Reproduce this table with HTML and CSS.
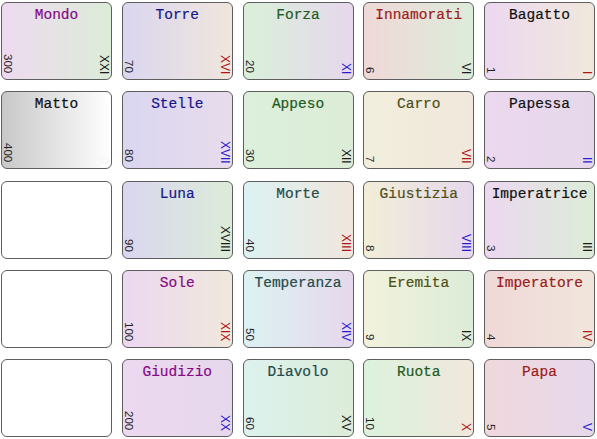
FILE: index.html
```html
<!DOCTYPE html>
<html>
<head>
<meta charset="utf-8">
<link rel="stylesheet" href="styles.css">
</head>
<body>
<div class="board">
  <div class="card g1"><div class="name c-purple">Mondo</div><div class="foot"><span class="num">300</span><span class="rom r-black">XXI</span></div></div>
  <div class="card g2"><div class="name c-navy">Torre</div><div class="foot"><span class="num">70</span><span class="rom r-red">XVI</span></div></div>
  <div class="card g3"><div class="name c-green">Forza</div><div class="foot"><span class="num">20</span><span class="rom r-blue">XI</span></div></div>
  <div class="card g4"><div class="name c-red">Innamorati</div><div class="foot"><span class="num">6</span><span class="rom r-black">VI</span></div></div>
  <div class="card g5"><div class="name c-black">Bagatto</div><div class="foot"><span class="num">1</span><span class="rom r-red">I</span></div></div>

  <div class="card g6"><div class="name c-black">Matto</div><div class="foot"><span class="num">400</span><span class="rom r-white">0</span></div></div>
  <div class="card g7"><div class="name c-navy">Stelle</div><div class="foot"><span class="num">80</span><span class="rom r-blue">XVII</span></div></div>
  <div class="card g8"><div class="name c-green">Appeso</div><div class="foot"><span class="num">30</span><span class="rom r-black">XII</span></div></div>
  <div class="card g9"><div class="name c-olive">Carro</div><div class="foot"><span class="num">7</span><span class="rom r-red">VII</span></div></div>
  <div class="card g10"><div class="name c-black">Papessa</div><div class="foot"><span class="num">2</span><span class="rom r-blue">II</span></div></div>

  <div class="card blank"></div>
  <div class="card g12"><div class="name c-navy">Luna</div><div class="foot"><span class="num">90</span><span class="rom r-black">XVIII</span></div></div>
  <div class="card g13"><div class="name c-slate">Morte</div><div class="foot"><span class="num">40</span><span class="rom r-red">XIII</span></div></div>
  <div class="card g14"><div class="name c-olive">Giustizia</div><div class="foot"><span class="num">8</span><span class="rom r-blue">VIII</span></div></div>
  <div class="card g15"><div class="name c-black">Imperatrice</div><div class="foot"><span class="num">3</span><span class="rom r-black">III</span></div></div>

  <div class="card blank"></div>
  <div class="card g17"><div class="name c-purple">Sole</div><div class="foot"><span class="num">100</span><span class="rom r-red">XIX</span></div></div>
  <div class="card g18"><div class="name c-slate">Temperanza</div><div class="foot"><span class="num">50</span><span class="rom r-blue">XIV</span></div></div>
  <div class="card g19"><div class="name c-olive">Eremita</div><div class="foot"><span class="num">9</span><span class="rom r-black">IX</span></div></div>
  <div class="card g20"><div class="name c-red">Imperatore</div><div class="foot"><span class="num">4</span><span class="rom r-red">IV</span></div></div>

  <div class="card blank"></div>
  <div class="card g22"><div class="name c-purple">Giudizio</div><div class="foot"><span class="num">200</span><span class="rom r-blue">XX</span></div></div>
  <div class="card g23"><div class="name c-slate">Diavolo</div><div class="foot"><span class="num">60</span><span class="rom r-black">XV</span></div></div>
  <div class="card g24"><div class="name c-green">Ruota</div><div class="foot"><span class="num">10</span><span class="rom r-red">X</span></div></div>
  <div class="card g25"><div class="name c-red">Papa</div><div class="foot"><span class="num">5</span><span class="rom r-blue">V</span></div></div>
</div>
</body>
</html>
```

FILE: styles.css
```css
html, body {
  margin: 0;
  padding: 0;
  background: #ffffff;
}

.board {
  display: grid;
  grid-template-columns: repeat(5, 111px);
  grid-template-rows: repeat(5, 78px);
  column-gap: 9.75px;
  row-gap: 11.25px;
  padding: 2px 0 0 1px;
}

.card {
  box-sizing: border-box;
  border: 1px solid #5e5e5e;
  border-radius: 6px;
  display: flex;
  flex-direction: column;
  justify-content: space-between;
  overflow: hidden;
  background: #ffffff;
}

.name {
  font-family: "Liberation Mono", "Courier New", monospace;
  font-size: 14.5px;
  line-height: 17px;
  text-align: center;
  padding-top: 4px;
  white-space: nowrap;
  -webkit-text-stroke: 0.2px currentColor;
}

.foot {
  display: flex;
  justify-content: space-between;
  align-items: flex-end;
  padding: 0 3px 5px 2px;
}

.num, .rom {
  writing-mode: vertical-rl;
  font-family: "Liberation Sans", Arial, sans-serif;
  line-height: 8px;
}

.num { color: #1e1e1e; padding-bottom: 1px; font-size: 11.5px; }
.rom { font-size: 12px; }

.c-purple { color: #850a85; }
.c-navy { color: #16168a; }
.c-green { color: #1f5a1f; }
.c-red { color: #9a1c1c; }
.c-black { color: #111111; }
.c-olive { color: #4f4f18; }
.c-slate { color: #254a4a; }

.r-black { color: #1a1a1a; }
.r-red { color: #b01414; }
.r-blue { color: #2a1ad0; }
.r-white { color: #f4f4f4; }

.g1 { background: linear-gradient(to right, #eedaf0, #dcecd8); }
.g2 { background: linear-gradient(to right, #dad6f0, #f0e6dc); }
.g3 { background: linear-gradient(to right, #daf0da, #e6d8ec); }
.g4 { background: linear-gradient(to right, #f0d8d8, #dcecda); }
.g5 { background: linear-gradient(to right, #ecd8f0, #f0e8dc); }
.g6 { background: linear-gradient(to right, #c8c8c8, #ffffff); }
.g7 { background: linear-gradient(to right, #dad6f0, #e8dcec); }
.g8 { background: linear-gradient(to right, #dcf0dc, #dcecd6); }
.g9 { background: linear-gradient(to right, #f2eedc, #f0e8dc); }
.g10 { background: linear-gradient(to right, #ecd8f0, #e6d8ea); }
.g12 { background: linear-gradient(to right, #dad6f0, #dcecd8); }
.g13 { background: linear-gradient(to right, #dcf2f2, #f0e6dc); }
.g14 { background: linear-gradient(to right, #f2eed8, #e6d8ec); }
.g15 { background: linear-gradient(to right, #ecd8f0, #dcecd8); }
.g17 { background: linear-gradient(to right, #ecd8f0, #f0e8dc); }
.g18 { background: linear-gradient(to right, #dcf2f2, #e6d8ec); }
.g19 { background: linear-gradient(to right, #f2f2dc, #dcecd8); }
.g20 { background: linear-gradient(to right, #f0d8d8, #f0e6dc); }
.g22 { background: linear-gradient(to right, #ecd8f0, #e6d8ec); }
.g23 { background: linear-gradient(to right, #dcf2ee, #dcecd8); }
.g24 { background: linear-gradient(to right, #dcf2dc, #f0e8dc); }
.g25 { background: linear-gradient(to right, #f0d8dc, #e6d8ec); }
```
